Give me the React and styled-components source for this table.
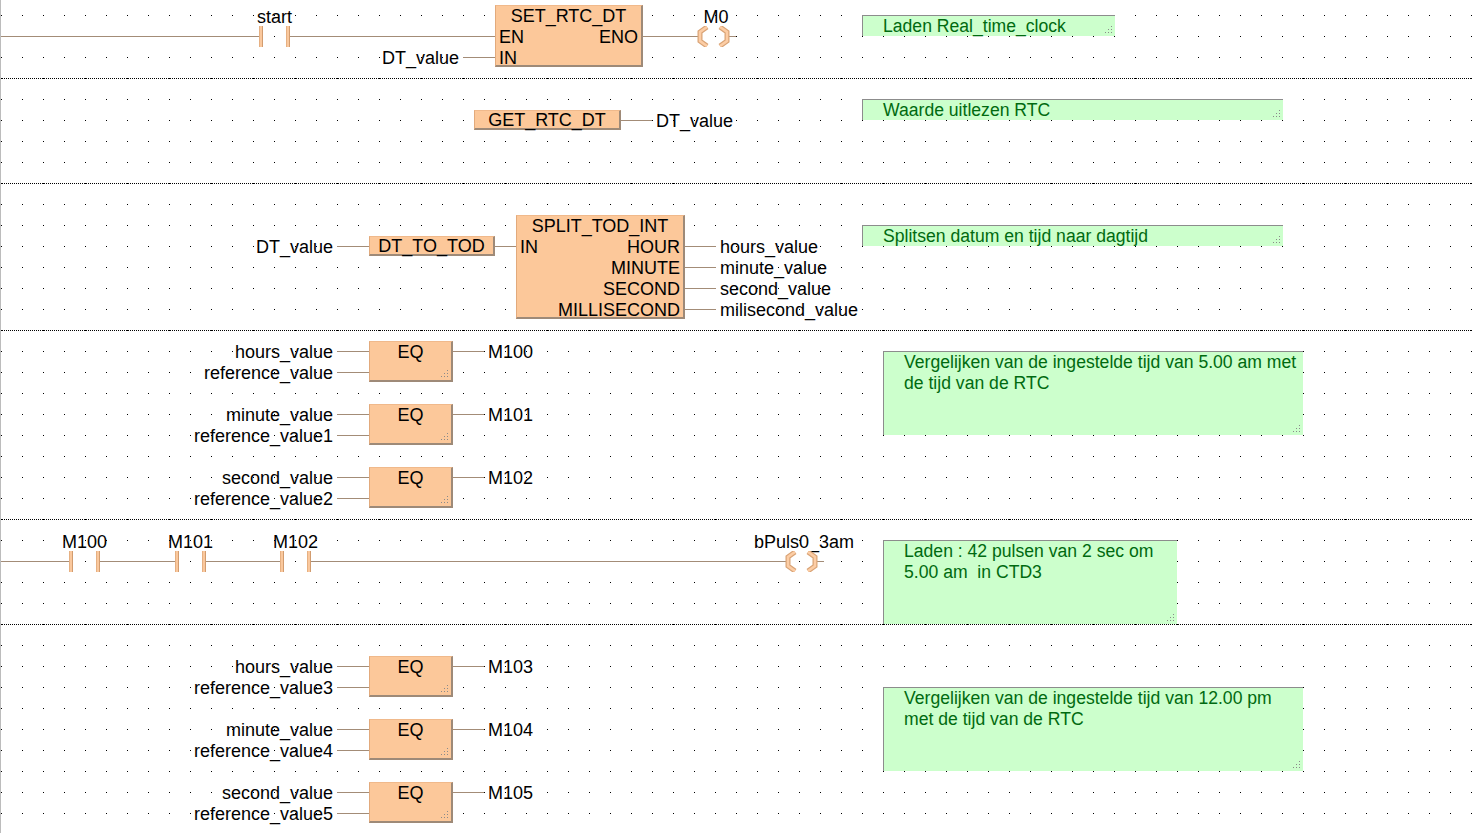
import React from "react";
import styled, { createGlobalStyle } from "styled-components";

const ROW = 21;
const WIRE = "#a38c77";

const GlobalStyle = createGlobalStyle`
  html, body {
    margin: 0;
    padding: 0;
    background: #fff;
  }
  body {
    font-family: "Liberation Sans", Arial, sans-serif;
    font-size: 18px;
    color: #000;
    overflow: hidden;
  }
`;

const Canvas = styled.main`
  position: relative;
  width: 1472px;
  height: 833px;
  overflow: hidden;
  display: flex;
  flex-direction: column;

  &::after {
    content: "";
    position: absolute;
    left: 0;
    top: 0;
    bottom: 0;
    width: 1px;
    background: #bcbcbc;
  }
`;

// one ladder network: dotted separator on top, dot grid every 21px
const Network = styled.section`
  position: relative;
  flex: none;
  height: ${(p) => p.$rows * ROW}px;
  margin-top: ${(p) => p.$shift || 0}px;
  background:
    ${(p) =>
      p.$first
        ? ""
        : "repeating-linear-gradient(90deg, #000 0 1px, transparent 1px 2px) 0 0 / 100% 1px no-repeat,"}
    linear-gradient(90deg, transparent 1px, #fff 1px) 1px 0 / 21px 21px,
    linear-gradient(#000 1px, #fff 1px) 1px 0 / 21px 21px;
`;

// a diagram node placed on the network canvas
const Spot = styled.div`
  position: absolute;
  left: ${(p) => p.$x}px;
  top: ${(p) => p.$y}px;
  display: flex;
  flex-direction: ${(p) => (p.$column ? "column" : "row")};
  align-items: flex-start;
  gap: ${(p) => p.$gap || 0}px;
`;

const Rung = styled.div`
  display: flex;
  align-items: flex-start;
`;

const Lead = styled.span`
  flex: none;
  width: ${(p) => p.$w}px;
  height: 1px;
  margin-top: ${(p) => (p.$rail ? 30 : 0)}px;
  background: ${WIRE};
`;

const PinColumn = styled.div`
  flex: none;
  width: ${(p) => (p.$w ? `${p.$w}px` : "auto")};
  padding-top: ${(p) => (p.$skip || 0) * ROW}px;
  display: flex;
  flex-direction: column;
`;

const PinLine = styled.div`
  height: 21px;
  display: flex;
  align-items: center;
  justify-content: ${(p) => (p.$end ? "flex-end" : "flex-start")};
  white-space: nowrap;
`;

const PinText = styled.span`
  height: 21px;
  line-height: 23px;
  margin: 0 4px;
`;

const Block = styled.div`
  position: relative;
  flex: none;
  align-self: flex-start;
  width: ${(p) => p.$w}px;
  height: ${(p) => (p.$single ? 20 : p.$rows * ROW - 1)}px;
  margin-top: ${(p) => (p.$lift ? -1 : 0)}px;
  box-sizing: border-box;
  display: flex;
  flex-direction: column;
  background: #fcc89a;
  border-left: 1px solid #e2aa7c;
  border-top: 1px solid #f0b98b;
  border-right: 2px solid #9e8a78;
  border-bottom: 2px solid #9e8a78;

  & > :first-child {
    margin-top: ${(p) => (p.$single ? -1 : 0)}px;
  }
`;

const BlockRow = styled.div`
  flex: none;
  height: 21px;
  line-height: 21px;
  display: flex;
  justify-content: ${(p) => (p.$center ? "center" : "space-between")};
  padding: 0 3px;
  white-space: nowrap;
`;

const Note = styled.div`
  position: absolute;
  left: ${(p) => p.$x}px;
  top: ${(p) => p.$y}px;
  width: ${(p) => p.$w}px;
  height: ${(p) => p.$h}px;
  box-sizing: border-box;
  padding-left: 20px;
  background: #ccffcc;
  border-top: 1px solid #8c8c8c;
  border-left: 1px solid #8c8c8c;
  color: #006a10;
  font-size: 17.6px;
  line-height: 21px;
  white-space: pre;
`;

const GripMark = styled.svg`
  position: absolute;
  right: 2px;
  bottom: 2px;
`;

const Part = styled.div`
  flex: none;
  width: ${(p) => p.$w}px;
  display: flex;
  flex-direction: column;
  align-items: center;
`;

const PartLabel = styled.span`
  height: 20px;
  line-height: 22px;
  white-space: nowrap;
`;

const Bars = styled.div`
  align-self: stretch;
  height: 21px;
  display: flex;
  justify-content: space-between;
`;

const Bar = styled.span`
  width: 2px;
  height: 21px;
  background: #fac89d;
  border-left: 1px solid #e6b082;
  border-right: 1px solid #d29c6f;
`;

const Grip = () => (
  <GripMark width="9" height="9" viewBox="0 0 9 9">
    {[[7, 1], [4, 4], [7, 4], [1, 7], [4, 7], [7, 7]].map(([x, y]) => (
      <rect key={`${x}-${y}`} x={x} y={y} width="1" height="1" fill="#8a8a8a" />
    ))}
  </GripMark>
);

const Contact = ({ label }) => (
  <Part $w={31}>
    <PartLabel>{label}</PartLabel>
    <Bars>
      <Bar />
      <Bar />
    </Bars>
  </Part>
);

const PAREN_L = "12,1 5,6 5,15 12,20";
const PAREN_R = "25,1 32,6 32,15 25,20";

const Coil = ({ label }) => (
  <Part $w={42}>
    <PartLabel>{label}</PartLabel>
    <svg width="42" height="21" viewBox="0 0 42 21">
      <line x1="0" y1="10.5" x2="5" y2="10.5" stroke={WIRE} />
      <line x1="33" y1="10.5" x2="41" y2="10.5" stroke={WIRE} />
      {[PAREN_L, PAREN_R].map((pts) => (
        <g key={pts}>
          <polyline points={pts} fill="none" stroke="#d9a375" strokeWidth="5" />
          <polyline points={pts} fill="none" stroke="#fccda5" strokeWidth="2.6" />
        </g>
      ))}
    </svg>
  </Part>
);

const InPin = ({ children, lead = 32 }) => (
  <PinLine $end>
    <PinText>{children}</PinText>
    <Lead $w={lead} />
  </PinLine>
);

const OutPin = ({ children }) => (
  <PinLine>
    <Lead $w={31} />
    <PinText>{children}</PinText>
  </PinLine>
);

const EqRung = ({ a, b, out }) => (
  <Rung>
    <PinColumn $w={189}>
      <InPin>{a}</InPin>
      <InPin>{b}</InPin>
    </PinColumn>
    <Block $w={84} $rows={2}>
      <BlockRow $center>EQ</BlockRow>
      <Grip />
    </Block>
    <PinColumn>
      <OutPin>{out}</OutPin>
    </PinColumn>
  </Rung>
);

export default function App() {
  return (
    <>
      <GlobalStyle />
      <Canvas>
        <Network $first $shift={-6} $rows={4}>
          <Spot $x={0} $y={12}>
            <Lead $rail $w={259} />
            <Contact label="start" />
            <Lead $rail $w={205} />
            <Block $lift $w={148} $rows={3}>
              <BlockRow $center>SET_RTC_DT</BlockRow>
              <BlockRow>
                <span>EN</span>
                <span>ENO</span>
              </BlockRow>
              <BlockRow>
                <span>IN</span>
              </BlockRow>
            </Block>
            <Lead $rail $w={52} />
            <Coil label="M0" />
          </Spot>
          <Spot $x={0} $y={53}>
            <PinColumn $w={495}>
              <InPin>DT_value</InPin>
            </PinColumn>
          </Spot>
          <Note $x={862} $y={21} $w={253} $h={21}>
            Laden Real_time_clock
            <Grip />
          </Note>
        </Network>

        <Network $rows={5}>
          <Spot $x={474} $y={32}>
            <Block $single $w={147}>
              <BlockRow $center>GET_RTC_DT</BlockRow>
            </Block>
            <PinColumn>
              <OutPin>DT_value</OutPin>
            </PinColumn>
          </Spot>
          <Note $x={862} $y={21} $w={421} $h={21}>
            Waarde uitlezen RTC
            <Grip />
          </Note>
        </Network>

        <Network $rows={7}>
          <Spot $x={180} $y={32}>
            <PinColumn $w={336} $skip={1}>
              <PinLine $end>
                <PinText>DT_value</PinText>
                <Lead $w={32} />
                <Block $single $w={126}>
                  <BlockRow $center>DT_TO_TOD</BlockRow>
                </Block>
                <Lead $w={21} />
              </PinLine>
            </PinColumn>
            <Block $w={169} $rows={5}>
              <BlockRow $center>SPLIT_TOD_INT</BlockRow>
              <BlockRow>
                <span>IN</span>
                <span>HOUR</span>
              </BlockRow>
              <BlockRow>
                <span />
                <span>MINUTE</span>
              </BlockRow>
              <BlockRow>
                <span />
                <span>SECOND</span>
              </BlockRow>
              <BlockRow>
                <span />
                <span>MILLISECOND</span>
              </BlockRow>
            </Block>
            <PinColumn $skip={1}>
              <OutPin>hours_value</OutPin>
              <OutPin>minute_value</OutPin>
              <OutPin>second_value</OutPin>
              <OutPin>milisecond_value</OutPin>
            </PinColumn>
          </Spot>
          <Note $x={862} $y={42} $w={421} $h={21}>
            Splitsen datum en tijd naar dagtijd
            <Grip />
          </Note>
        </Network>

        <Network $rows={9}>
          <Spot $column $gap={21} $x={180} $y={11}>
            <EqRung a="hours_value" b="reference_value" out="M100" />
            <EqRung a="minute_value" b="reference_value1" out="M101" />
            <EqRung a="second_value" b="reference_value2" out="M102" />
          </Spot>
          <Note $x={883} $y={21} $w={420} $h={84}>
            {"Vergelijken van de ingestelde tijd van 5.00 am met\nde tijd van de RTC"}
            <Grip />
          </Note>
        </Network>

        <Network $rows={5}>
          <Spot $x={0} $y={12}>
            <Lead $rail $w={69} />
            <Contact label="M100" />
            <Lead $rail $w={75} />
            <Contact label="M101" />
            <Lead $rail $w={74} />
            <Contact label="M102" />
            <Lead $rail $w={472} />
            <Coil label="bPuls0_3am" />
          </Spot>
          <Note $x={883} $y={21} $w={294} $h={84}>
            {"Laden : 42 pulsen van 2 sec om\n5.00 am  in CTD3"}
            <Grip />
          </Note>
        </Network>

        <Network $rows={11}>
          <Spot $column $gap={21} $x={180} $y={32}>
            <EqRung a="hours_value" b="reference_value3" out="M103" />
            <EqRung a="minute_value" b="reference_value4" out="M104" />
            <EqRung a="second_value" b="reference_value5" out="M105" />
          </Spot>
          <Note $x={883} $y={63} $w={420} $h={84}>
            {"Vergelijken van de ingestelde tijd van 12.00 pm\nmet de tijd van de RTC"}
            <Grip />
          </Note>
        </Network>
      </Canvas>
    </>
  );
}
